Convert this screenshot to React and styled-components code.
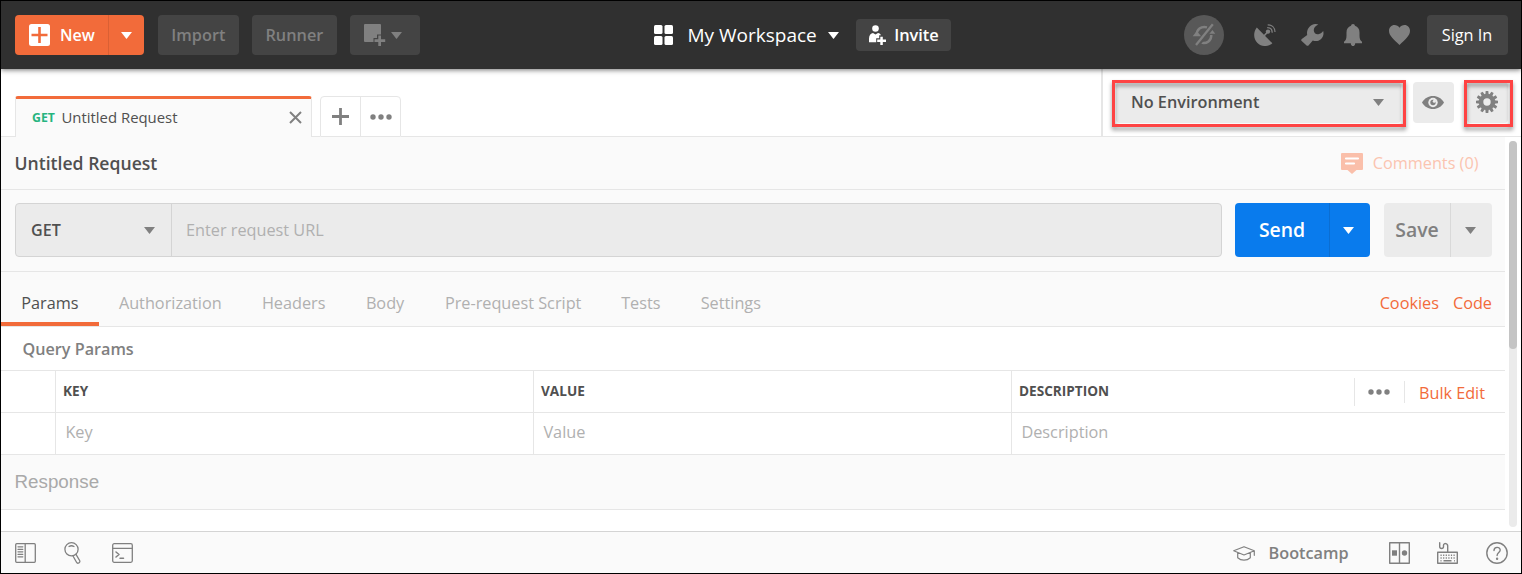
import React from 'react';
import styled, { createGlobalStyle, css } from 'styled-components';

const orange = '#f26b3a';
const line = '#e6e6e6';
const grey = '#808080';

const GlobalStyle = createGlobalStyle`
  * { box-sizing: border-box; }
  body { margin: 0; background: #fff; overflow: hidden; }
  button { border: 0; padding: 0; margin: 0; background: none; font: inherit; color: inherit; }
  svg { display: block; flex: none; }
`;

const Window = styled.div`
  width: 1522px;
  height: 574px;
  border: 1px solid #000;
  background: #fff;
  display: flex;
  flex-direction: column;
  font-family: 'Open Sans', sans-serif;
  font-size: 16.25px;
  line-height: 22px;
  white-space: nowrap;
  color: #505050;
  overflow: hidden;
`;

/* ---------- header ---------- */
const Header = styled.header`
  position: relative;
  z-index: 1;
  flex: none;
  display: flex;
  align-items: center;
  height: 68px;
  padding: 0 13px 0 14px;
  background: #303030;
  box-shadow: 0 1px 5px rgba(0, 0, 0, 0.55);
`;

const NewButton = styled.div`
  display: flex;
  width: 129px;
  height: 40px;
  border-radius: 4px;
  background: ${orange};
  color: #fff;
  font-weight: 600;
  margin-right: 14px;
`;

const NewMain = styled.button`
  display: flex;
  align-items: center;
  gap: 10px;
  width: 94px;
  padding-left: 14px;
  border-right: 1px solid #da6034;
  font-size: 16px;
`;

const CaretButton = styled.button`
  flex: 1;
  display: flex;
  align-items: center;
  justify-content: center;
  padding-right: ${(p) => p.$shift || 0}px;
`;

const HeaderButton = styled.button`
  display: flex;
  align-items: center;
  justify-content: center;
  gap: ${(p) => p.$gap || 0}px;
  width: ${(p) => p.$width}px;
  height: ${(p) => p.$height || 40}px;
  padding-right: ${(p) => p.$shift || 0}px;
  border-radius: 4px;
  background: #444;
  color: ${(p) => p.$color || '#808080'};
  font-weight: ${(p) => p.$weight || 600};
  font-size: ${(p) => p.$size || 16.3}px;
`;

const LeftActions = styled.div`
  display: flex;
  gap: 13px;
  width: 496px;
`;

const Workspace = styled.div`
  display: flex;
  align-items: center;
  color: #fff;
  width: 530px;
  margin-left: 1px;
`;

const WorkspaceName = styled.span`
  font-size: 19px;
  margin: 0 12px 0 14px;
  width: 129px;
`;

const WorkspaceCaret = styled.span`
  margin-right: 17px;
`;

const StatusIcons = styled.div`
  display: flex;
  align-items: center;
  color: #808080;
`;

const SyncBadge = styled.span`
  display: flex;
  align-items: center;
  justify-content: center;
  width: 40px;
  height: 40px;
  border-radius: 50%;
  background: #585858;
`;

const IconSlot = styled.span`
  display: flex;
  justify-content: center;
  width: ${(p) => p.$width}px;
  margin-left: ${(p) => p.$left || 0}px;
`;

/* ---------- request tabs and environment ---------- */
const TabBar = styled.div`
  flex: none;
  display: flex;
  height: 68px;
`;

const Tabs = styled.div`
  display: flex;
  align-items: flex-end;
  width: 1100px;
`;

const BaseLine = styled.div`
  height: 1px;
  background: ${line};
  width: ${(p) => (p.$width ? p.$width + 'px' : 'auto')};
  flex: ${(p) => (p.$width ? 'none' : 1)};
`;

const RequestTab = styled.div`
  display: flex;
  align-items: center;
  width: 297px;
  height: 41px;
  padding: 0 9.5px 2px 16px;
  border: 1px solid ${line};
  border-width: 0 1px;
  border-top: 3px solid ${orange};
  border-radius: 3px 3px 0 0;
  background: #fafafa;
  font-size: 14.9px;
`;

const TabMethod = styled.span`
  width: 29.5px;
  padding-top: 2px;
  color: #26b47f;
  font-size: 12.3px;
  font-weight: 700;
`;

const TabName = styled.span`
  flex: 1;
`;

const TabTools = styled.div`
  display: flex;
  width: 81px;
  height: 41px;
  border: 1px solid ${line};
  border-radius: 4px 4px 0 0;
  color: ${grey};
`;

const TabTool = styled.button`
  flex: 1;
  display: flex;
  align-items: center;
  justify-content: center;
  & + & { border-left: 1px solid ${line}; }
`;

const Environment = styled.div`
  display: flex;
  flex: 1;
  align-items: flex-start;
  padding: 13px 10px 0 13px;
  border-left: 2px solid ${line};
  border-bottom: 1px solid ${line};
`;

const EnvBox = styled.div`
  position: relative;
  display: flex;
  align-items: center;
  justify-content: ${(p) => (p.$select ? 'space-between' : 'center')};
  width: ${(p) => p.$width}px;
  height: 41px;
  margin-right: ${(p) => p.$gap || 0}px;
  padding: ${(p) => (p.$select ? '0 17px 1px 15px' : '0 2px 1px 0')};
  border-radius: 4px;
  background: #ebebeb;
  color: ${grey};
`;

const EnvName = styled.span`
  color: #505050;
  font-weight: 600;
`;

const Highlight = styled.span`
  position: absolute;
  top: -2px;
  bottom: -4px;
  left: ${(p) => p.$left}px;
  right: ${(p) => p.$right}px;
  border: 3px solid #fe4343;
  filter: drop-shadow(0 3px 2px rgba(0, 0, 0, 0.42));
`;

/* ---------- request builder ---------- */
const Body = styled.div`
  flex: 1;
  display: flex;
  min-height: 0;
`;

const Builder = styled.main`
  width: 1504px;
  display: flex;
  flex-direction: column;
`;

const Row = styled.div`
  flex: none;
  display: flex;
  align-items: center;
  height: ${(p) => p.$height}px;
  border-bottom: 1px solid ${line};
  background: ${(p) => (p.$white ? '#fff' : '#fafafa')};
`;

const TitleRow = styled(Row)`
  justify-content: space-between;
  padding: 0 26.5px 0 13.5px;
`;

const Title = styled.h1`
  margin: 0;
  font-size: 17.6px;
  font-weight: 600;
`;

const Comments = styled.div`
  display: flex;
  align-items: center;
  gap: 10px;
  color: #fac4b0;
`;

const UrlRow = styled(Row)`
  padding: 0 13px 1px 14px;
`;

const UrlField = styled.div`
  display: flex;
  width: 1207px;
  height: 54px;
  border: 1px solid #d4d4d4;
  border-radius: 4px;
  background: #ebebeb;
  margin-right: 13px;
`;

const Method = styled.div`
  display: flex;
  align-items: center;
  justify-content: space-between;
  width: 156px;
  padding: 0 16px 0 15px;
  border-right: 1px solid #d4d4d4;
  color: ${grey};
  span { color: #505050; font-weight: 600; font-size: 16.1px; }
`;

const UrlInput = styled.div`
  flex: 1;
  display: flex;
  align-items: center;
  padding-left: 14px;
  color: #b0b0b0;
`;

const SplitButton = styled.div`
  display: flex;
  width: ${(p) => p.$width}px;
  height: 54px;
  border-radius: 4px;
  font-size: 19.4px;
  font-weight: 600;
  ${(p) => p.$primary
    ? css`background: #097bed; color: #fff; --divider: #0a6ed3; margin-right: 14px;`
    : css`background: #ebebeb; color: ${grey}; --divider: #d9d9d9;`}
`;

const SplitMain = styled.button`
  width: ${(p) => p.$width}px;
  border-right: 1px solid var(--divider);
`;

const SectionTabs = styled(Row)`
  align-items: stretch;
  padding-right: 13px;
`;

const SectionTab = styled.button`
  width: ${(p) => p.$width}px;
  padding-top: ${(p) => (p.$active ? 12 : 8)}px;
  text-align: left;
  padding-left: 20.2px;
  color: ${(p) => (p.$active ? '#505050' : '#b0b0b0')};
  border-bottom: ${(p) => (p.$active ? `4px solid ${orange}` : 0)};
`;

const SectionLinks = styled.div`
  flex: 1;
  display: flex;
  align-items: center;
  justify-content: flex-end;
  gap: 14px;
  padding-top: 8px;
  color: ${orange};
`;

const Heading = styled(Row)`
  padding: 1px 0 0 21.5px;
  color: ${grey};
  font-weight: 600;
  font-size: 16.2px;
`;

const GridRow = styled.div`
  display: grid;
  grid-template-columns: 54px 478px 478px 1fr;
  height: 42px;
  border-bottom: 1px solid ${line};
  color: ${(p) => (p.$head ? '#505050' : '#b0b0b0')};
  font-size: ${(p) => (p.$head ? 13.6 : 16.3)}px;
  font-weight: ${(p) => (p.$head ? 700 : 400)};
`;

const Cell = styled.div`
  display: flex;
  align-items: center;
  padding: ${(p) => (p.$head ? '0 0 1px 7px' : '0 0 3px 9.4px')};
  & + & { border-left: 1px solid ${line}; }
`;

const CellTools = styled.div`
  display: flex;
  align-items: center;
  margin-left: auto;
  padding: 2px 20px 0 0;
  color: ${grey};
`;

const MoreTool = styled.span`
  display: flex;
  align-items: center;
  justify-content: center;
  width: 50px;
  height: 28px;
  padding: 0 1px 1px 0;
  border-left: 1px solid ${line};
`;

const BulkEdit = styled.span`
  width: 81px;
  height: 22px;
  padding-left: 14px;
  border-left: 1px solid ${line};
  color: ${orange};
  font-size: 16.2px;
  font-weight: 400;
  line-height: 24px;
`;

const Response = styled(Row)`
  padding: 0 0 0 13.5px;
  color: #a9a9a9;
  font: 18.8px 'Liberation Sans', Arial, sans-serif;
`;

const ScrollTrack = styled.div`
  width: 8px;
  height: 386px;
  margin: 4px 0 0 4px;
  border-radius: 4px;
  background: #ebebeb;
`;

const ScrollThumb = styled.div`
  height: 208px;
  border-radius: 4px;
  background: #c4c4c4;
`;

/* ---------- footer ---------- */
const Footer = styled.footer`
  flex: none;
  display: flex;
  align-items: center;
  height: 42px;
  padding: 1px 13px 0 14px;
  border-top: 1px solid #d4d4d4;
  background: #fafafa;
  color: ${grey};
`;

const FooterLeft = styled.div`
  display: flex;
  align-items: center;
  flex: 1;
`;

const Bootcamp = styled.div`
  display: flex;
  align-items: center;
  gap: 13.5px;
  width: 156px;
  font-weight: 600;
`;

/* ---------- icons ---------- */
const Caret = () => (
  <svg width="11" height="7" viewBox="0 0 11 7" fill="currentColor"><path d="M0 0h11L5.500 7z" /></svg>
);
const Dots = () => (
  <svg width="22" height="6" viewBox="0 0 22 6" fill="currentColor"><circle cx="3" cy="3" r="2.7" /><circle cx="11" cy="3" r="2.7" /><circle cx="19" cy="3" r="2.7" /></svg>
);
const NewIcon = () => (
  <svg width="21" height="22" viewBox="0 0 21 22"><rect width="21" height="22" rx="2.5" fill="#fff" /><path d="M10.5 3v16M2.5 11h16" stroke={orange} strokeWidth="2.6" /></svg>
);
const NewWindowIcon = () => (
  <svg width="22" height="22" viewBox="0 0 22 22" fill="currentColor"><path d="M1 0h15a1 1 0 0 1 1 1v9.500h-4V14H9.500v4H1a1 1 0 0 1-1-1V1a1 1 0 0 1 1-1z" /><path d="M14.300 11.500h2.700v3.800h4.200V18H17v4h-2.700v-4h-3.800v-2.700h3.800z" /></svg>
);
const GridIcon = () => (
  <svg width="19" height="20" viewBox="0 0 19 20" fill="#fff"><rect width="8.500" height="9" rx="1.500" /><rect x="10.500" width="8.500" height="9" rx="1.500" /><rect y="11" width="8.500" height="9" rx="1.500" /><rect x="10.500" y="11" width="8.500" height="9" rx="1.500" /></svg>
);
const InviteIcon = () => (
  <svg width="17" height="20" viewBox="0 0 17 20" fill="#fff"><circle cx="6.500" cy="3.500" r="3.300" /><path d="M0 17.300v-3.800C0 10 2 8.300 4 8l2.500 1.500L9 8c1.500.3 2.500 1 3 2.200h-1.800v3.100H7.200v4z" /><path d="M11.300 11.800h2.500v2.800H17V17h-3.200v3h-2.500v-3H8.200v-2.400h3.100z" /></svg>
);
const SyncOffIcon = () => (
  <svg width="24" height="24" viewBox="0 0 24 24" fill="none" stroke="#808080" strokeWidth="2.400"><path d="M4.700 12C4.500 6.500 9 2.900 15 4.300M19.300 12c.2 5.500-4.300 9.100-10.300 7.700" /><path d="M.7 13.300h8.400L4.800 8zM14.900 10.700h8.400L19.200 5.400z" fill="#808080" stroke="none" /><path d="M19.300 2.200 3.800 21.300M22 3.200 6.300 22.800" stroke="#585858" strokeWidth="2.200" /><path d="M20.800 1.300 4 22" strokeWidth="2.300" /></svg>
);
const SatelliteIcon = () => (
  <svg width="22" height="22" viewBox="0 0 22 22" fill="currentColor"><path d="M2.800 3.400 18.300 19.200C14.500 23 7.500 23 3.500 19-.8 14.800-.8 7.800 2.800 3.400z" /><path d="m9.500 12.500 4.500-5" stroke="currentColor" strokeWidth="1.600" /><circle cx="14" cy="7.600" r="2.200" /><path d="M13.200 3.700c3 0 5 2 5 5M13.700.8c4.500 0 7.300 3 7.300 7.200" fill="none" stroke="currentColor" strokeWidth="1.200" /></svg>
);
const WrenchIcon = () => (
  <svg width="23" height="22" viewBox="0 0 23 22" fill="currentColor"><path d="M17.300.5C14 2 12.600 4 12.800 6.500c.2 2.700 2.200 4.200 4.600 3.700 1.900-.4 3.300-1.600 4.800-3.300.8 3.200 0 6.300-2.400 8.300-2.400 2-5.300 2.300-8 1.200L7.700 21.200c-.7.8-1.700.8-2.400.1L.7 17.100c-.7-.6-.6-1.500.1-2.100L6.200 11C5.600 7.800 6.400 4.700 8.800 2.400 11.200.1 14.400-.6 17.300.5z" /></svg>
);
const BellIcon = () => (
  <svg width="18" height="22" viewBox="0 0 18 22" fill="currentColor"><path d="M9 0c1.100 0 1.900.8 1.900 1.800 3 .9 4.600 3.300 4.600 6.700v3.300c0 3 .8 4.700 2.500 6v1.400H0v-1.400c1.700-1.300 2.500-3 2.500-6V8.500c0-3.400 1.600-5.800 4.600-6.700C7.100.8 7.900 0 9 0zM6.800 19.200h4.400C11.200 21.100 10.200 22 9 22s-2.200-.9-2.200-2.800z" /></svg>
);
const HeartIcon = () => (
  <svg width="21" height="20" viewBox="0 0 21 20" fill="currentColor"><path d="M10.500 20C5 14.500 0 11 0 5.800 0 2.500 2.400 0 5.500 0c2 0 3.900 1 5 2.800C11.600 1 13.500 0 15.500 0 18.600 0 21 2.500 21 5.800 21 11 16 14.500 10.500 20z" /></svg>
);
const CloseIcon = () => (
  <svg width="13" height="13" viewBox="0 0 13 13" stroke={grey} strokeWidth="2"><path d="m1 1 11 11M12 1 1 12" /></svg>
);
const PlusIcon = () => (
  <svg width="17" height="17" viewBox="0 0 17 17" stroke="currentColor" strokeWidth="2.800"><path d="M8.500 0v17M0 8.500h17" /></svg>
);
const EyeIcon = () => (
  <svg width="22" height="13" viewBox="0 0 22 13"><path d="M0 6.500C2.500 2.200 6.300 0 11 0s8.500 2.200 11 6.500c-2.500 4.300-6.300 6.500-11 6.500S2.500 10.800 0 6.500z" fill={grey} /><circle cx="11" cy="6.500" r="4.700" fill="#ebebeb" /><circle cx="11" cy="6.500" r="2.700" fill={grey} /><circle cx="12.300" cy="5.300" r="1.500" fill="#ebebeb" /></svg>
);
const GearIcon = () => (
  <svg width="22" height="22" viewBox="-11 -11 22 22"><circle r="6" fill="none" stroke={grey} strokeWidth="4.600" />
    {Array.from({ length: 12 }, (_, i) => <path key={i} d="M-1.700-7.300-1.300-11h2.600L1.700-7.300z" fill={grey} transform={`rotate(${i * 30})`} />)}
  </svg>
);
const CommentIcon = () => (
  <svg width="22" height="21" viewBox="0 0 22 21"><path d="M1 0h20a1 1 0 0 1 1 1v15a1 1 0 0 1-1 1h-5.500L11 21l-4.500-4H1a1 1 0 0 1-1-1V1a1 1 0 0 1 1-1z" fill="#fabfaa" /><path d="M5 5.500h12M5 10.500h8" stroke="#fff" strokeWidth="2.200" strokeLinecap="round" /></svg>
);
const Line = ({ w, h, children, sw = 1.3 }) => (
  <svg width={w} height={h} viewBox={`0 0 ${w} ${h}`} fill="none" stroke="currentColor" strokeWidth={sw} strokeLinecap="round" strokeLinejoin="round">{children}</svg>
);
const SidebarIcon = () => (
  <Line w={21} h={20}><rect x=".7" y=".7" width="19.600" height="18.600" rx="1" /><path d="M10.200 1v18M3 3.800h4.800M3 6.300h4.800M3 8.800h4.800M3 11.300h4.800M3 13.800h4.800" /></Line>
);
const SearchIcon = () => (
  <Line w={18} h={22}><circle cx="7.500" cy="7.300" r="6.600" /><path d="M5 4.500c1.600-1 3.300-1 5 0" /><path d="m9 14 3.500 6.300c.5.900 1.500 1.100 2.400.6.900-.5 1.200-1.500.7-2.400L12 12.300" /></Line>
);
const ConsoleIcon = () => (
  <Line w={21} h={20}><rect x=".7" y=".7" width="19.600" height="18.600" rx="1.500" /><path d="M1 5.300h19" /><path d="m4 9 3 2.500L4 14M8 15.200h3.500" strokeWidth="1.500" /></Line>
);
const CapIcon = () => (
  <Line w={22} h={15} sw={1.200}><path d="M.7 4.800 11 .7l10.300 4.100L11 9zM4.700 6.500v5.200c3.500 3.200 9.100 3.200 12.600 0V6.500M21.300 4.800v4.500" /></Line>
);
const PanesIcon = () => (
  <Line w={21} h={22} sw={1.400}><rect x=".7" y=".7" width="19.600" height="20.600" /><path d="M10.500 1v20" /><rect x="3" y="8.300" width="5" height="5.400" fill="currentColor" stroke="none" /><circle cx="15.500" cy="11" r="2.700" fill="currentColor" stroke="none" /></Line>
);
const KeyboardIcon = () => (
  <Line w={21} h={22} sw={1.400}><rect x=".7" y="10.200" width="19.600" height="11.100" /><path d="M2.700 .7v4c0 2.300 3.800 2.300 3.800 0V3.200C6.500 1 10.700.8 10.700 4v6" /><path d="M3.500 13.300h14.500M3.500 16h14.500" strokeDasharray="1.200 1.400" strokeLinecap="butt" /><path d="M6.500 18.800h8M3.500 18.800h1M17 18.800h.8" strokeLinecap="butt" /></Line>
);
const HelpIcon = () => (
  <Line w={22} h={22} sw={1.400}><circle cx="11" cy="11" r="10.200" /><path d="M8 8.500c0-4.200 6.200-4 6.200-.4 0 2.400-3.100 2.600-3.100 5.400" /><circle cx="11.100" cy="16.700" r=".5" fill="currentColor" /></Line>
);

const sections = [
  ['Params', 97.7], ['Authorization', 143], ['Headers', 104], ['Body', 79],
  ['Pre-request Script', 176.3], ['Tests', 79.500], ['Settings', 100],
];

export default function App() {
  return (
    <Window>
      <GlobalStyle />
      <Header>
        <NewButton>
          <NewMain><NewIcon />New</NewMain>
          <CaretButton><Caret /></CaretButton>
        </NewButton>
        <LeftActions>
          <HeaderButton $width={81}>Import</HeaderButton>
          <HeaderButton $width={85}>Runner</HeaderButton>
          <HeaderButton $width={70} $gap={5} $shift={4}><NewWindowIcon /><Caret /></HeaderButton>
        </LeftActions>
        <Workspace>
          <GridIcon />
          <WorkspaceName>My Workspace</WorkspaceName>
          <WorkspaceCaret><Caret /></WorkspaceCaret>
          <HeaderButton $width={95} $height={32} $gap={8} $color="#fff" $size={16.4}><InviteIcon />Invite</HeaderButton>
        </Workspace>
        <StatusIcons>
          <SyncBadge><SyncOffIcon /></SyncBadge>
          <IconSlot $width={22} $left={30}><SatelliteIcon /></IconSlot>
          <IconSlot $width={23} $left={25}><WrenchIcon /></IconSlot>
          <IconSlot $width={18} $left={20}><BellIcon /></IconSlot>
          <IconSlot $width={21} $left={27}><HeartIcon /></IconSlot>
          <IconSlot $width={81} $left={17}>
            <HeaderButton $width={81} $shift={1} $color="#fff" $weight={400} $size={16.3}>Sign In</HeaderButton>
          </IconSlot>
        </StatusIcons>
      </Header>

      <TabBar>
        <Tabs>
          <BaseLine $width={14} />
          <RequestTab>
            <TabMethod>GET</TabMethod>
            <TabName>Untitled Request</TabName>
            <CloseIcon />
          </RequestTab>
          <BaseLine $width={8} />
          <TabTools>
            <TabTool><PlusIcon /></TabTool>
            <TabTool><Dots /></TabTool>
          </TabTools>
          <BaseLine />
        </Tabs>
        <Environment>
          <EnvBox $select $width={285} $gap={12}>
            <EnvName>No Environment</EnvName>
            <Caret />
            <Highlight $left={-4} $right={-5} />
          </EnvBox>
          <EnvBox $width={41} $gap={13}><EyeIcon /></EnvBox>
          <EnvBox $width={41}>
            <GearIcon />
            <Highlight $left={-3} $right={-5} />
          </EnvBox>
        </Environment>
      </TabBar>

      <Body>
        <Builder>
          <TitleRow $height={53}>
            <Title>Untitled Request</Title>
            <Comments><CommentIcon />Comments (0)</Comments>
          </TitleRow>
          <UrlRow $height={82}>
            <UrlField>
              <Method><span>GET</span><Caret /></Method>
              <UrlInput>Enter request URL</UrlInput>
            </UrlField>
            <SplitButton $primary $width={135}>
              <SplitMain $width={95}>Send</SplitMain>
              <CaretButton $shift={3}><Caret /></CaretButton>
            </SplitButton>
            <SplitButton $width={108}>
              <SplitMain $width={67}>Save</SplitMain>
              <CaretButton $shift={3}><Caret /></CaretButton>
            </SplitButton>
          </UrlRow>
          <SectionTabs $height={55}>
            {sections.map(([name, width], i) => (
              <SectionTab key={name} $width={width} $active={i === 0}>{name}</SectionTab>
            ))}
            <SectionLinks><span>Cookies</span><span>Code</span></SectionLinks>
          </SectionTabs>
          <Heading $white $height={44}>Query Params</Heading>
          <GridRow $head>
            <Cell $head />
            <Cell $head>KEY</Cell>
            <Cell $head>VALUE</Cell>
            <Cell $head>
              DESCRIPTION
              <CellTools>
                <MoreTool><Dots /></MoreTool>
                <BulkEdit>Bulk Edit</BulkEdit>
              </CellTools>
            </Cell>
          </GridRow>
          <GridRow>
            <Cell />
            <Cell>Key</Cell>
            <Cell>Value</Cell>
            <Cell>Description</Cell>
          </GridRow>
          <Response $height={55}>Response</Response>
        </Builder>
        <ScrollTrack><ScrollThumb /></ScrollTrack>
      </Body>

      <Footer>
        <FooterLeft>
          <IconSlot $width={21}><SidebarIcon /></IconSlot>
          <IconSlot $width={18} $left={28}><SearchIcon /></IconSlot>
          <IconSlot $width={21} $left={30}><ConsoleIcon /></IconSlot>
        </FooterLeft>
        <Bootcamp><CapIcon />Bootcamp</Bootcamp>
        <IconSlot $width={21}><PanesIcon /></IconSlot>
        <IconSlot $width={21} $left={27}><KeyboardIcon /></IconSlot>
        <IconSlot $width={22} $left={28}><HelpIcon /></IconSlot>
      </Footer>
    </Window>
  );
}
